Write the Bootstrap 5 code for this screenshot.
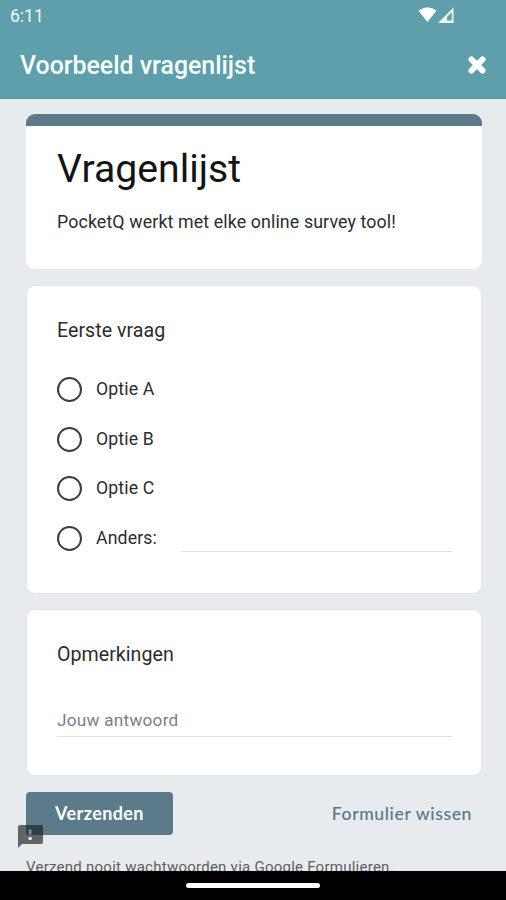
<!DOCTYPE html>
<html lang="nl">
<head>
<meta charset="utf-8">
<meta name="viewport" content="width=device-width, initial-scale=1">
<title>Voorbeeld vragenlijst</title>
<link rel="stylesheet" href="https://cdn.jsdelivr.net/npm/bootstrap@5.3.0/dist/css/bootstrap.min.css">
<style>
body{font-family:Roboto,"Liberation Sans",sans-serif;background:#e7ebed;color:#202124;height:900px}
.app-top{background:#5f9eab;height:99px;border-bottom:1px solid #5596a4}
.status{height:32px;padding:0 51px 0 10px}
.clock{font-size:17.5px;line-height:32px;color:#eef7f8}
.titlebar{height:66px;padding:0 20px 0 20px}
.app-title{font-size:24.9px;line-height:66px;font-weight:500;color:#f6fdfd;padding-top:2px}
.page{height:772px;padding:15px 24px 0 26px}
.card.panel{border:1px solid #e3e7e9;border-radius:9px;overflow:hidden;padding:0 29px 0 30px;color:#2b2c2f}
.intro{height:155px;margin-bottom:16px}
.card.panel.intro{border:0;border-top:12px solid #5b7a8a;padding:0 30px 0 31px}
.choice{height:309px;margin-bottom:15px}
.remarks{height:167px;margin-bottom:16px}
.form-title{font-size:39.2px;line-height:46px;margin-top:20px;color:#141415}
.form-sub{font-size:17.8px;line-height:24px;letter-spacing:.12px;margin-top:18px}
.question{font-size:19.6px;line-height:24px;margin-top:33px;letter-spacing:.03px}
.options{margin-top:22px}
.option{height:49.4px}
.option:last-child{height:50.5px}
.option .form-check-input{width:25px;height:25px;margin:0 14.500px 0 -.5px;border:2px solid #3b3d41;float:none;flex:none}
.option label{font-size:17.7px;line-height:24px;letter-spacing:.12px;padding-bottom:1px}
.line{border:0;border-bottom:1px solid #dcdee0;border-radius:0;padding:0;background:transparent;box-shadow:none}
.other-line{height:25px;margin:3px 0 0 24px}
.answer{font-size:17.2px;height:34px;letter-spacing:.25px;margin-top:36px}
.answer::placeholder{color:#7b7f82;opacity:1}
.send{width:147px;height:43px;background:#5b7a8a;color:#fff;border:0;border-radius:4px;font:700 18px/43px Lato,sans-serif;letter-spacing:.4px;padding:0}
.clear{color:#557888;font:500 17.6px/43px Lato,sans-serif;letter-spacing:.6px;padding:0;border:0;margin-right:10px}
.warning{font-size:15px;line-height:20px;letter-spacing:.25px;margin-top:22px;color:#5c6063}
.report{left:18px;top:825px}
.home{height:29px;background:#000}
.pill{width:134px;height:5px;background:#fff;border-radius:3px}
</style>
<script src="https://cdn.jsdelivr.net/npm/bootstrap@5.3.0/dist/js/bootstrap.bundle.min.js"></script>
</head>
<body class="d-flex flex-column overflow-hidden position-relative">
<header class="app-top flex-shrink-0">
  <div class="status d-flex justify-content-between">
    <span class="clock">6:11</span>
    <svg width="37" height="32" viewBox="0 0 37 32"><path d="M.5 10.800Q9.500 3.500 18.500 10.800L9.500 22Z" fill="#fff"/><path d="M35.500 7.500V23H20Z" fill="#e9f4f6"/><path d="M33.800 12.200V20.500H29V16.900Z" fill="#5f9eab"/></svg>
  </div>
  <div class="titlebar d-flex justify-content-between align-items-center">
    <h1 class="app-title m-0">Voorbeeld vragenlijst</h1>
    <button class="btn p-0 border-0 d-flex" aria-label="Sluiten"><svg width="18" height="18" viewBox="0 0 18 18"><path d="M3.400 3.400 14.600 14.600M14.600 3.400 3.400 14.600" stroke="#fff" stroke-width="5.800" stroke-linecap="round"/></svg></button>
  </div>
</header>
<main class="page flex-shrink-0 overflow-hidden">
  <section class="card panel intro">
    <h2 class="form-title mb-0 fw-normal">Vragenlijst</h2>
    <p class="form-sub mb-0">PocketQ werkt met elke online survey tool!</p>
  </section>
  <section class="card panel choice">
    <h3 class="question mb-0 fw-normal">Eerste vraag</h3>
    <div class="options">
      <div class="option d-flex align-items-center"><input class="form-check-input rounded-circle" type="radio" name="q" id="a"><label for="a">Optie A</label></div>
      <div class="option d-flex align-items-center"><input class="form-check-input rounded-circle" type="radio" name="q" id="b"><label for="b">Optie B</label></div>
      <div class="option d-flex align-items-center"><input class="form-check-input rounded-circle" type="radio" name="q" id="c"><label for="c">Optie C</label></div>
      <div class="option d-flex align-items-center"><input class="form-check-input rounded-circle" type="radio" name="q" id="d"><label for="d">Anders:</label><input class="form-control line other-line flex-fill w-auto" type="text" aria-label="Anders"></div>
    </div>
  </section>
  <section class="card panel remarks">
    <h3 class="question mb-0 fw-normal">Opmerkingen</h3>
    <input class="form-control line answer" type="text" placeholder="Jouw antwoord">
  </section>
  <div class="d-flex justify-content-between">
    <button class="btn send">Verzenden</button>
    <button class="btn clear">Formulier wissen</button>
  </div>
  <p class="warning mb-0 text-nowrap">Verzend nooit wachtwoorden via Google Formulieren.</p>
</main>
<svg class="report position-absolute" width="25" height="25" viewBox="0 0 25 25"><path d="M2 0H23Q25 0 25 2V17Q25 19 23 19H4L0 23V2Q0 0 2 0Z" fill="#303030" fill-opacity=".72"/><path d="M8 0H23Q25 0 25 2V10H8Z" fill="#1f3a48" fill-opacity=".5"/><path d="M10.700 4.500H13.500V9.500H10.700Z" fill="#6f8e9c"/><path d="M10.500 12H13.700V15H10.500Z" fill="#e1e6e8"/></svg>
<footer class="home d-flex justify-content-center align-items-center flex-shrink-0"><div class="pill"></div></footer>
</body>
</html>
